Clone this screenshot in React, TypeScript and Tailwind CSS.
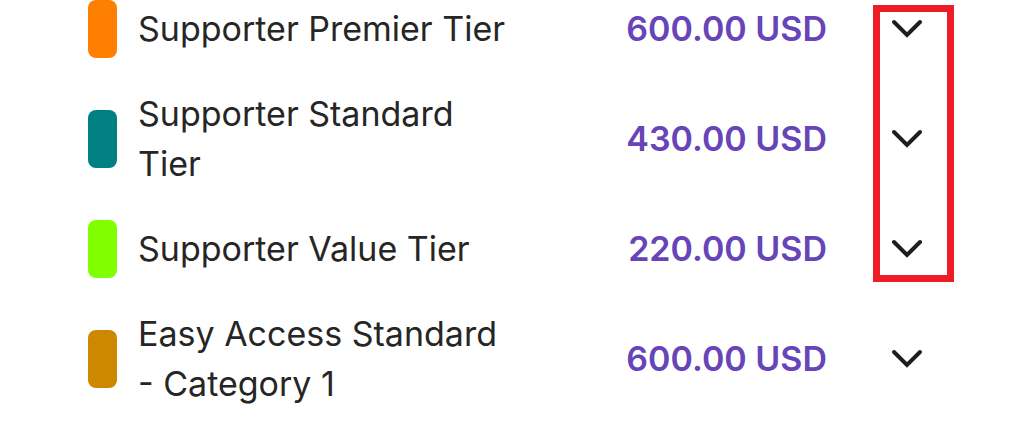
import { useState } from 'react';

const tiers = [
  { name: 'Supporter Premier Tier', price: '600.00 USD', color: '#ff8000' },
  { name: 'Supporter Standard Tier', price: '430.00 USD', color: '#008080' },
  { name: 'Supporter Value Tier', price: '220.00 USD', color: '#80ff00' },
  { name: 'Easy Access Standard - Category 1', price: '600.00 USD', color: '#cc8800' },
];

function Chevron() {
  return (
    <svg width="32" height="20" viewBox="0 0 32 20" fill="none">
      <path d="M3 3 L16 16 L29 3" stroke="#1e1e1e" strokeWidth="4" strokeLinecap="round" strokeLinejoin="miter" />
    </svg>
  );
}

export default function App() {
  const [open, setOpen] = useState<number | null>(null);

  return (
    <div className="relative w-[1024px] h-[429px] overflow-hidden bg-white font-['Inter','Noto_Sans',sans-serif]">
      <ul className="flex flex-col gap-[31px] pl-[88px]">
        {tiers.map((t, i) => (
          <li key={t.name} className="flex items-center">
            <span className="w-[29px] h-[58px] rounded-[8px] shrink-0" style={{ backgroundColor: t.color }} />
            <span className="ml-[21px] w-[374px] text-[34px] leading-[50px] text-[#262626]">{t.name}</span>
            <span className="w-[315px] text-right text-[34px] leading-[50px] font-semibold text-[#6744b8]">{t.price}</span>
            <button
              className="ml-[64px] w-[32px] h-[20px] flex items-center justify-center"
              onClick={() => setOpen(open === i ? null : i)}
            >
              <Chevron />
            </button>
          </li>
        ))}
      </ul>

      {/* annotation box round the first three toggles */}
      <div className="absolute left-[873px] top-[5px] w-[81px] h-[277px] border-[7px] border-[#ee1c25]" />
    </div>
  );
}
